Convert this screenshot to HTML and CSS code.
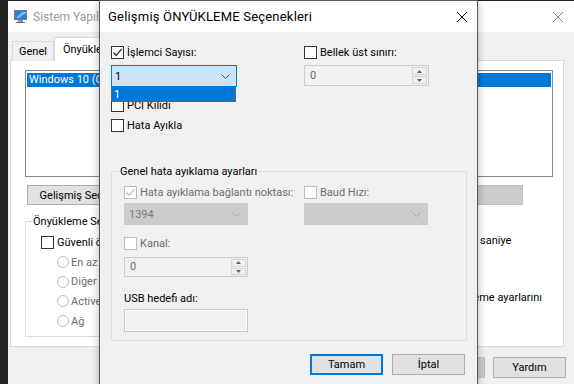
FILE: index.html
```html
<!DOCTYPE html>
<html>
    <head>
        <meta charset="utf-8">
        <title>Sistem Yapılandırması</title>
        <link rel="stylesheet" href="styles.css">
    </head>
    <body>
        <div class="desktop">
            <div class="window mainWin">
                <div class="titleBar inactive">
                    <svg class="appIcon" width="15" height="15" viewBox="0 0 15 15">
                        <rect x="1" y="1" width="13" height="10" fill="#6b7c93"/>
                        <rect x="2" y="2" width="11" height="8" fill="#2f7fd1"/>
                        <path d="M3 9L9 3H13V4L6 9z" fill="#7fb7ee"/>
                        <rect x="5" y="11" width="5" height="2" fill="#8a96a6"/>
                        <rect x="3" y="13" width="9" height="1" fill="#5d6b7e"/>
                    </svg>
                    <span class="titleText">Sistem Yapılandırması</span>
                    <div class="closeBtn">
                        <svg width="10" height="10" viewBox="0 0 10 10"><path d="M0 0L10 10M10 0L0 10" stroke="#8c8c8c" stroke-width="1"/></svg>
                    </div>
                </div>
                <div class="tabs">
                    <div class="tab">Genel</div>
                    <div class="tab selected">Önyükleme</div>
                    <div class="tab">Hizmetler</div>
                    <div class="tab">Başlangıç</div>
                    <div class="tab">Araçlar</div>
                </div>
                <div class="tabPanel">
                    <div class="listBox">
                        <div class="listItem">Windows 10 (C:\Windows) : Geçerli işletim sistemi; Varsayılan işletim sistemi</div>
                    </div>
                    <div class="panelButtons">
                        <div class="btn wideBtn">Gelişmiş Seçenekler...</div>
                        <div class="btn wideBtn pushRight disabled">Varsayılan olarak ayarla</div>
                        <div class="btn delBtn disabled">Sil</div>
                    </div>
                    <div class="bootRow">
                        <div class="group bootGroup">
                            <span class="groupTitle">Önyükleme Seçenekleri</span>
                            <div class="bootCol">
                                <div class="chk"><span class="box"></span><span>Güvenli önyükleme</span></div>
                                <div class="radioList">
                                    <div class="radio off"><span class="dot"></span><span>En az</span></div>
                                    <div class="radio off"><span class="dot"></span><span>Diğer kabuk</span></div>
                                    <div class="radio off"><span class="dot"></span><span>Active Directory onarımı</span></div>
                                    <div class="radio off"><span class="dot"></span><span>Ağ</span></div>
                                </div>
                            </div>
                        </div>
                        <div class="timeout">
                            <span>Zaman aşımı:</span>
                            <div class="timeoutRow">
                                <div class="textBox">30</div>
                                <span>saniye</span>
                            </div>
                            <div class="chk permanent"><span class="box"></span><span>Tüm önyükleme ayarlarını<br>kalıcı yap</span></div>
                        </div>
                    </div>
                </div>
                <div class="footerButtons">
                    <div class="btn">Tamam</div>
                    <div class="btn">İptal</div>
                    <div class="btn disabled">Uygula</div>
                    <div class="btn">Yardım</div>
                </div>
            </div>

            <div class="window dialog">
                <div class="titleBar">
                    <span class="titleText">Gelişmiş ÖNYÜKLEME Seçenekleri</span>
                    <div class="closeBtn">
                        <svg width="10" height="10" viewBox="0 0 10 10"><path d="M0 0L10 10M10 0L0 10" stroke="#000" stroke-width="1"/></svg>
                    </div>
                </div>
                <div class="dialogBody">
                    <div class="topGrid">
                        <div class="col">
                            <div class="chk"><span class="box checked"><svg width="11" height="11" viewBox="0 0 11 11"><path d="M1.5 5.5L4.2 8.5L9.8 1.8" fill="none" stroke="#333" stroke-width="1.3"/></svg></span><span>İşlemci Sayısı:</span></div>
                            <div class="comboWrap">
                                <div class="combo focused">
                                    <span>1</span>
                                    <svg width="9" height="5" viewBox="0 0 9 5"><polyline points="0.5,0.5 4.5,4.5 8.5,0.5" fill="none" stroke="#505050"/></svg>
                                </div>
                                <div class="dropList"><div class="dropItem">1</div></div>
                            </div>
                            <div class="chk pciRow"><span class="box"></span><span>PCI Kilidi</span></div>
                            <div class="chk debugRow"><span class="box"></span><span>Hata Ayıkla</span></div>
                        </div>
                        <div class="col">
                            <div class="chk"><span class="box"></span><span>Bellek üst sınırı:</span></div>
                            <div class="spin memSpin">
                                <span class="spinValue">0</span>
                                <div class="spinBtns">
                                    <span><svg width="5" height="3" viewBox="0 0 5 3"><path d="M2.5 0L5 3H0z" fill="#606060"/></svg></span>
                                    <span><svg width="5" height="3" viewBox="0 0 5 3"><path d="M0 0H5L2.5 3z" fill="#606060"/></svg></span>
                                </div>
                            </div>
                        </div>
                    </div>

                    <div class="group debugGroup">
                        <span class="groupTitle">Genel hata ayıklama ayarları</span>
                        <div class="debugGrid">
                            <div class="col">
                                <div class="chk off"><span class="box checked"><svg width="11" height="11" viewBox="0 0 11 11"><path d="M1.5 5.5L4.2 8.5L9.8 1.8" fill="none" stroke="#c4c4c4" stroke-width="1.3"/></svg></span><span>Hata ayıklama bağlantı noktası:</span></div>
                                <div class="combo disabled">
                                    <span>1394</span>
                                    <svg width="9" height="5" viewBox="0 0 9 5"><polyline points="0.5,0.5 4.5,4.5 8.5,0.5" fill="none" stroke="#a8a8a8"/></svg>
                                </div>
                                <div class="chk off kanalRow"><span class="box"></span><span>Kanal:</span></div>
                                <div class="spin kanalSpin">
                                    <span class="spinValue">0</span>
                                    <div class="spinBtns">
                                        <span><svg width="5" height="3" viewBox="0 0 5 3"><path d="M2.5 0L5 3H0z" fill="#606060"/></svg></span>
                                        <span><svg width="5" height="3" viewBox="0 0 5 3"><path d="M0 0H5L2.5 3z" fill="#606060"/></svg></span>
                                    </div>
                                </div>
                                <div class="fieldLabel">USB hedefi adı:</div>
                                <div class="textBox usbBox"></div>
                            </div>
                            <div class="col">
                                <div class="chk off"><span class="box"></span><span>Baud Hızı:</span></div>
                                <div class="combo disabled">
                                    <span></span>
                                    <svg width="9" height="5" viewBox="0 0 9 5"><polyline points="0.5,0.5 4.5,4.5 8.5,0.5" fill="none" stroke="#a8a8a8"/></svg>
                                </div>
                            </div>
                        </div>
                    </div>

                    <div class="dialogButtons">
                        <div class="btn default">Tamam</div>
                        <div class="btn">İptal</div>
                    </div>
                </div>
            </div>
        </div>
    </body>
</html>
```

FILE: styles.css
```css
* {
    box-sizing: border-box;
}
body {
    margin: 0;
    width: 574px;
    height: 384px;
    overflow: hidden;
    background-color: #232323;
    font-family: Roboto, "Liberation Sans", sans-serif;
    font-size: 11px;
    color: #000;
}
.desktop {
    position: relative;
    width: 574px;
    height: 384px;
}
.window {
    position: absolute;
    background-color: #f0f0f0;
}
.mainWin {
    left: 8px;
    top: 1px;
    width: 566px;
    height: 400px;
    z-index: 0;
}
.titleBar {
    display: flex;
    align-items: center;
    height: 31px;
    background-color: white;
}
.appIcon {
    margin-left: 5px;
}
.titleText {
    margin-left: 5px;
    font-size: 12px;
    white-space: nowrap;
}
.inactive .titleText {
    color: #9a9a9a;
}
.closeBtn {
    display: flex;
    align-items: center;
    justify-content: center;
    width: 30px;
    height: 100%;
    margin-left: auto;
}
.mainWin .closeBtn {
    margin-right: 1px;
}

/* tabs */
.tabs {
    display: flex;
    align-items: flex-end;
    height: 24px;
    margin: 5px 0 -1px 4px;
}
.tab {
    position: relative;
    height: 20px;
    padding: 0 6px;
    line-height: 19px;
    border: 1px solid #d9d9d9;
    border-bottom: none;
    background-color: #f0f0f0;
    white-space: nowrap;
}
.tab.selected {
    height: 24px;
    padding: 2px 8px 0;
    background-color: white;
    z-index: 1;
}
.tabPanel {
    height: 287px;
    margin: 0 10px 0 2px;
    padding: 9px 10px 0 14px;
    border: 1px solid #d9d9d9;
    background-color: white;
}
.listBox {
    height: 107px;
    padding: 2px 1px;
    border: 1px solid #828790;
}
.listItem {
    height: 14px;
    padding-left: 2px;
    line-height: 14px;
    background-color: #0078d7;
    color: white;
    white-space: nowrap;
    overflow: hidden;
}
.panelButtons {
    display: flex;
    gap: 8px;
    margin: 8px 30px 0 2px;
}
.pushRight {
    margin-left: auto;
}
.btn {
    display: flex;
    align-items: center;
    justify-content: center;
    width: 73px;
    height: 21px;
    border: 1px solid #adadad;
    background-color: #e1e1e1;
    white-space: nowrap;
}
.panelButtons .btn {
    height: 20px;
}
.wideBtn {
    width: 132px;
}
.delBtn {
    width: 110px;
}
.btn.disabled {
    border-color: #bfbfbf;
    background-color: #cccccc;
    color: #838383;
}
.btn.default {
    border: 2px solid #0078d7;
}
.bootRow {
    display: flex;
    margin-top: 16px;
}

/* group boxes */
.group {
    border: 1px solid #dcdcdc;
}
.groupTitle {
    display: block;
    width: fit-content;
    margin-top: -8px;
    padding: 0 1px;
    line-height: 15px;
    background-color: #f0f0f0;
}
.bootGroup {
    width: 310px;
    height: 116px;
    padding-left: 15px;
}
.bootGroup .groupTitle {
    margin-left: -9px;
    background-color: white;
}
.bootCol {
    display: flex;
    flex-direction: column;
    gap: 7px;
    margin-top: 7px;
}
.radioList {
    display: flex;
    flex-direction: column;
    gap: 7.7px;
    padding-left: 16px;
}
.radio {
    display: flex;
    align-items: center;
    gap: 2px;
    height: 12px;
    white-space: nowrap;
}
.dot {
    width: 12px;
    height: 12px;
    border: 1px solid #bcbcbc;
    border-radius: 50%;
    background-color: white;
}
.off {
    color: #6d6d6d;
}
.timeout {
    display: flex;
    flex-direction: column;
    width: 164px;
    margin: -8px 0 0 auto;
    line-height: 15px;
}
.timeoutRow {
    display: flex;
    align-items: center;
    gap: 4px;
    margin: 2px 0 0 31px;
}
.timeoutRow .textBox {
    width: 56px;
    height: 20px;
    padding-left: 4px;
    line-height: 18px;
    border: 1px solid #7a7a7a;
    background-color: white;
}
.chk.permanent {
    align-items: flex-start;
    height: auto;
    margin: 40px 0 0 12px;
    white-space: nowrap;
}

/* checkboxes */
.chk {
    display: flex;
    align-items: center;
    gap: 3px;
    height: 13px;
    white-space: nowrap;
}
.box {
    display: flex;
    align-items: center;
    justify-content: center;
    flex-shrink: 0;
    width: 13px;
    height: 13px;
    border: 1px solid #333;
    background-color: white;
}
.off .box {
    border-color: #bcbcbc;
}

/* footer of the main window */
.footerButtons {
    display: flex;
    justify-content: flex-end;
    gap: 8px;
    margin-top: 10px;
    padding-right: 8px;
}

/* dialog */
.dialog {
    left: 99px;
    top: 0;
    width: 379px;
    height: 400px;
    border: 1px solid #5a5a5a;
    box-shadow: 0 0 8px rgba(0, 0, 0, 0.3);
    z-index: 1;
}
.dialog .titleText {
    margin-left: 8px;
    font-size: 13px;
    letter-spacing: 0.2px;
}
.dialog .closeBtn {
    margin-right: 0;
}
.dialogBody {
    padding: 14px 10px 0 11px;
}
.topGrid {
    display: grid;
    grid-template-columns: 126px 125px;
    column-gap: 67px;
}
.comboWrap {
    position: relative;
    margin-top: 6px;
}
.combo {
    display: flex;
    align-items: center;
    justify-content: space-between;
    height: 22px;
    padding: 0 6px 0 3px;
    border: 1px solid #cccccc;
}
.combo.focused {
    border-color: #0078d7;
    background-color: #cce4f7;
}
.combo.disabled {
    margin-top: 4px;
    padding-left: 4px;
    background-color: #cccccc;
    color: #7a7a7a;
}
.dropList {
    position: absolute;
    top: 22px;
    left: 0;
    width: 125px;
    border: 1px solid #646464;
    background-color: white;
    z-index: 2;
}
.dropItem {
    height: 13px;
    padding-left: 2px;
    line-height: 13px;
    background-color: #0078d7;
    color: white;
}
.pciRow {
    margin-top: 12px;
}
.debugRow {
    margin-top: 7px;
}
.spin {
    display: flex;
    height: 21px;
    border: 1px solid #cccccc;
    background-color: #f0f0f0;
}
.memSpin {
    margin-top: 6px;
}
.spinValue {
    flex: 1;
    padding-left: 5px;
    line-height: 19px;
    color: #6d6d6d;
}
.spinBtns {
    display: flex;
    flex-direction: column;
    gap: 1px;
    width: 16px;
    padding: 1px 1px 1px 0;
}
.spinBtns span {
    display: flex;
    flex: 1;
    align-items: center;
    justify-content: center;
    border: 1px solid #d4d4d4;
    background-color: #f0f0f0;
}
.debugGroup {
    margin-top: 39px;
    padding: 0 0 8px 12px;
}
.debugGroup .groupTitle {
    margin-left: -5px;
}
.debugGrid {
    display: grid;
    grid-template-columns: 124px 124px;
    column-gap: 56px;
    margin-top: 7px;
}
.kanalRow {
    margin-top: 12px;
}
.kanalSpin {
    height: 20px;
    margin-top: 7px;
}
.kanalSpin .spinValue {
    line-height: 18px;
}
.fieldLabel {
    margin-top: 14px;
    line-height: 15px;
}
.usbBox {
    height: 23px;
    margin-top: 3px;
    border: 1px solid #c8c8c8;
    box-shadow: inset 0 0 0 1px white;
}
.dialogButtons {
    display: flex;
    justify-content: flex-end;
    gap: 9px;
    margin: 13px 2px 0 0;
}
```
